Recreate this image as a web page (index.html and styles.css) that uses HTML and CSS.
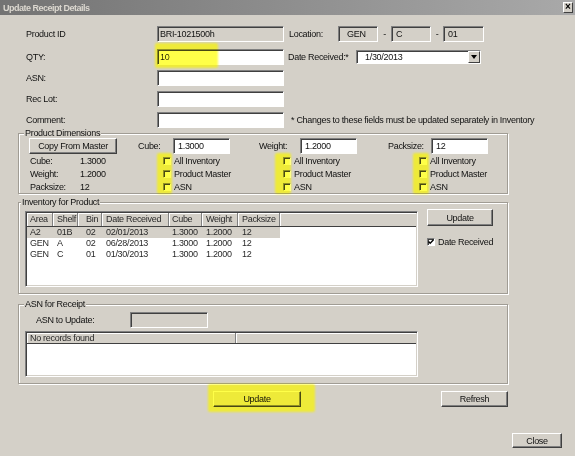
FILE: index.html
```html
<!DOCTYPE html>
<html lang="en">
<head>
    <meta charset="UTF-8">
    <title>Update Receipt Details</title>
    <link rel="stylesheet" href="styles.css">
</head>
<body>
<div class="window">
    <div class="titlebar">
        <span class="title">Update Receipt Details</span>
        <span class="close-x">&times;</span>
    </div>

    <div class="form-top">
        <div class="row row-first">
            <span class="lbl">Product ID</span>
            <div class="field off field-main">BRI-1021500h</div>
            <div class="side">
                <span class="loc-lbl">Location:</span>
                <div class="field off loc loc-gen">GEN</div>
                <span class="dash">-</span>
                <div class="field off loc">C</div>
                <span class="dash dash-2">-</span>
                <div class="field off loc loc-last">01</div>
            </div>
        </div>
        <div class="row">
            <span class="lbl">QTY:</span>
            <div class="field field-main">10</div>
            <div class="side">
                <span class="date-lbl">Date Received:*</span>
                <div class="field select">
                    <span>1/30/2013</span>
                    <span class="drop"><span class="tri"></span></span>
                </div>
            </div>
        </div>
        <div class="row">
            <span class="lbl">ASN:</span>
            <div class="field field-main"></div>
        </div>
        <div class="row">
            <span class="lbl">Rec Lot:</span>
            <div class="field field-main"></div>
        </div>
        <div class="row row-last">
            <span class="lbl">Comment:</span>
            <div class="field field-main"></div>
            <div class="side note">* Changes to these fields must be updated separately in Inventory</div>
        </div>
    </div>

    <!-- product dimensions -->
    <div class="group group-dims">
        <span class="group-title">Product Dimensions</span>
        <div class="dims">
            <div class="dcol dcol-a">
                <div class="dtop"><div class="btn btn-copy">Copy From Master</div></div>
                <div class="stats">
                    <div class="line"><span class="stat-lbl">Cube:</span>1.3000</div>
                    <div class="line"><span class="stat-lbl">Weight:</span>1.2000</div>
                    <div class="line"><span class="stat-lbl">Packsize:</span>12</div>
                </div>
            </div>
            <div class="dcol dcol-b">
                <div class="dtop"><span class="dim-lbl lbl-cube">Cube:</span><div class="field dim-in">1.3000</div></div>
                <div class="checks">
                    <div class="line"><span class="chk"></span>All Inventory</div>
                    <div class="line"><span class="chk"></span>Product Master</div>
                    <div class="line"><span class="chk"></span>ASN</div>
                </div>
            </div>
            <div class="dcol dcol-c">
                <div class="dtop"><span class="dim-lbl lbl-weight">Weight:</span><div class="field dim-in">1.2000</div></div>
                <div class="checks">
                    <div class="line"><span class="chk"></span>All Inventory</div>
                    <div class="line"><span class="chk"></span>Product Master</div>
                    <div class="line"><span class="chk"></span>ASN</div>
                </div>
            </div>
            <div class="dcol dcol-d">
                <div class="dtop"><span class="dim-lbl lbl-pack">Packsize:</span><div class="field dim-in">12</div></div>
                <div class="checks">
                    <div class="line"><span class="chk"></span>All Inventory</div>
                    <div class="line"><span class="chk"></span>Product Master</div>
                    <div class="line"><span class="chk"></span>ASN</div>
                </div>
            </div>
        </div>
    </div>

    <!-- inventory -->
    <div class="group group-inv">
        <span class="group-title">Inventory for Product</span>
        <div class="inv">
            <div class="grid grid-inv">
                <div class="gh">
                    <span>Area</span><span>Shelf</span><span>Bin</span><span>Date Received</span><span>Cube</span><span>Weight</span><span>Packsize</span><span></span>
                </div>
                <div class="gr sel">
                    <span>A2</span><span>01B</span><span>02</span><span>02/01/2013</span><span>1.3000</span><span>1.2000</span><span>12</span><span></span>
                </div>
                <div class="gr">
                    <span>GEN</span><span>A</span><span>02</span><span>06/28/2013</span><span>1.3000</span><span>1.2000</span><span>12</span><span></span>
                </div>
                <div class="gr">
                    <span>GEN</span><span>C</span><span>01</span><span>01/30/2013</span><span>1.3000</span><span>1.2000</span><span>12</span><span></span>
                </div>
            </div>
            <div class="inv-side">
                <div class="btn btn-inv">Update</div>
                <div class="line line-date">
                    <span class="chk on"><svg width="6" height="6" viewBox="0 0 6 6"><path d="M0.5 2.5 L2.2 4.3 L5.5 0.8" fill="none" stroke="#000" stroke-width="1.4"/></svg></span>Date Received
                </div>
            </div>
        </div>
    </div>

    <!-- asn -->
    <div class="group group-asn">
        <span class="group-title">ASN for Receipt</span>
        <div class="asn">
            <div class="asn-row">
                <span class="asn-lbl">ASN to Update:</span>
                <div class="field off asn-in"></div>
            </div>
            <div class="grid grid-asn">
                <div class="gh gh-asn"><span>No records found</span><span></span></div>
            </div>
        </div>
    </div>

    <div class="actions">
        <div class="btn btn-upd">Update</div>
        <div class="btn btn-refresh">Refresh</div>
    </div>
    <div class="btn btn-close">Close</div>

    <!-- highlighter marks -->
    <div class="hl" style="left:155px;top:43px;width:63px;height:25px"></div>
    <div class="hl" style="left:157px;top:153px;width:15px;height:41px"></div>
    <div class="hl" style="left:275px;top:153px;width:16px;height:41px"></div>
    <div class="hl" style="left:413px;top:153px;width:16px;height:41px"></div>
    <div class="hl" style="left:208px;top:384px;width:107px;height:28px"></div>
</div>
</body>
</html>
```

FILE: styles.css
```css
* {
    box-sizing: border-box;
}
body {
    margin: 0;
    background: #d4d0c8;
    font-family: "Liberation Sans", Arial, sans-serif;
    font-size: 9px;
    letter-spacing: -0.3px;
    color: #111;
}
.window {
    position: relative;
    width: 575px;
    height: 456px;
    background: #d4d0c8;
    overflow: hidden;
}
.titlebar {
    display: flex;
    align-items: center;
    justify-content: space-between;
    height: 15px;
    padding: 0 2px 0 3px;
    background: linear-gradient(to right, #737373, #a9a9a9);
}
.title {
    color: #dcd8d0;
    font-weight: bold;
    letter-spacing: -0.5px;
}
.close-x {
    width: 10px;
    height: 11px;
    background: #d4d0c8;
    border: 1px solid;
    border-color: #fff #404040 #404040 #fff;
    font: bold 10px/8px "Liberation Sans", sans-serif;
    letter-spacing: 0;
    text-align: center;
    color: #000;
}

/* top form */
.form-top {
    padding: 11px 0 0 26px;
}
.row {
    display: flex;
    align-items: center;
    height: 16px;
    margin-bottom: 5px;
}
.row-first {
    margin-bottom: 7px;
}
.row-last {
    margin-bottom: 0;
}
.row > *,
.side > *,
.dtop > *,
.line > *,
.asn-row > * {
    flex-shrink: 0;
    white-space: nowrap;
}
.lbl {
    width: 131px;
}
.field {
    height: 16px;
    line-height: 14px;
    padding-left: 2px;
    background: #fff;
    border: 1px solid;
    border-color: #808080 #fff #fff #808080;
    box-shadow: inset 1px 1px 0 #404040;
    white-space: nowrap;
    overflow: hidden;
}
.field.off {
    background: #d4d0c8;
}
.field-main {
    width: 127px;
}
.side {
    display: flex;
    align-items: center;
    margin-left: 4px;
}
.note {
    padding-left: 3px;
    white-space: nowrap;
}
.loc-lbl {
    width: 50px;
    padding-left: 1px;
}
.loc {
    width: 40px;
    padding-left: 4px;
}
.loc-gen {
    padding-left: 8px;
}
.loc-last {
    width: 41px;
}
.dash {
    width: 13px;
    text-align: center;
}
.dash-2 {
    width: 12px;
}
.date-lbl {
    width: 68px;
}
.select {
    display: flex;
    align-items: center;
    justify-content: space-between;
    width: 125px;
    height: 14px;
    padding-left: 8px;
}
.drop {
    display: flex;
    align-items: center;
    justify-content: center;
    width: 12px;
    height: 12px;
    background: #d4d0c8;
    border: 1px solid;
    border-color: #fff #404040 #404040 #fff;
}
.tri {
    border-left: 3px solid transparent;
    border-right: 3px solid transparent;
    border-top: 4px solid #000;
}

/* groups */
.group {
    margin-left: 18px;
    width: 490px;
    border: 1px solid #a09c94;
    box-shadow: inset 1px 1px 0 #fff, 1px 1px 0 #fff;
}
.group-title {
    display: block;
    width: fit-content;
    height: 12px;
    line-height: 12px;
    margin: -7px 0 -5px 5px;
    padding: 0 1px;
    background: #d4d0c8;
}
.group-dims {
    margin-top: 5px;
}
.group-inv {
    margin-top: 8px;
}
.group-inv .group-title {
    margin-left: 2px;
}
.group-asn {
    margin-top: 10px;
}

/* product dimensions */
.dims {
    display: flex;
    padding: 4px 0 0 10px;
}
.dcol-a {
    width: 109px;
}
.dcol-b {
    width: 121px;
}
.dcol-c {
    width: 129px;
}
.dcol-d {
    flex: 1;
}
.dtop {
    display: flex;
    align-items: center;
    height: 16px;
}
.lbl-cube {
    width: 35px;
}
.lbl-weight {
    width: 41px;
}
.lbl-pack {
    width: 43px;
}
.dim-in {
    width: 57px;
    padding-left: 4px;
}
.line {
    display: flex;
    align-items: center;
    height: 13px;
    white-space: nowrap;
}
.stats {
    padding-left: 1px;
}
.stat-lbl {
    width: 50px;
}
.dcol-b .checks {
    padding-left: 25px;
}
.dcol-c .checks {
    padding-left: 24px;
}
.dcol-d .checks {
    padding-left: 31px;
}
.chk {
    display: inline-flex;
    align-items: center;
    justify-content: center;
    width: 8px;
    height: 8px;
    margin-right: 3px;
    background: #fff;
    border: 1px solid;
    border-color: #808080 #fff #fff #808080;
    box-shadow: inset 1px 1px 0 #404040;
}

/* buttons */
.btn {
    display: flex;
    align-items: center;
    justify-content: center;
    height: 16px;
    background: #d4d0c8;
    border: 1px solid;
    border-color: #fff #404040 #404040 #fff;
    box-shadow: inset -1px -1px 0 #808080;
    white-space: nowrap;
}
.btn-copy {
    width: 88px;
}

/* grids */
.inv {
    display: flex;
    padding: 6px 0 6px 6px;
}
.grid {
    width: 393px;
    padding: 1px;
    background: #fff;
    border: 1px solid;
    border-color: #808080 #fff #fff #808080;
    box-shadow: inset 1px 1px 0 #404040, inset -1px -1px 0 #d4d0c8;
    color: #2a2a2a;
}
.grid-inv {
    height: 76px;
    margin-top: 2px;
}
.gh,
.gr {
    display: grid;
    grid-template-columns: 26px 25px 24px 67px 33px 36px 42px 1fr;
}
.gh {
    height: 14px;
    background: #d4d0c8;
    border-bottom: 1px solid #404040;
}
.gh span {
    line-height: 13px;
    border-right: 1px solid #808080;
    box-shadow: inset 1px 1px 0 #fff;
    white-space: nowrap;
    overflow: hidden;
}
.gh span:last-child {
    border-right: 0;
}
.gr {
    height: 11px;
    line-height: 11px;
}
.gr span {
    white-space: nowrap;
}
.gr.sel span:not(:last-child) {
    background: #d4d0c8;
}
.gh span:nth-child(1), .gr span:nth-child(1) { padding-left: 3px; }
.gh span:nth-child(2), .gr span:nth-child(2) { padding-left: 4px; }
.gh span:nth-child(3), .gr span:nth-child(3) { padding-left: 8px; }
.gh span:nth-child(4), .gr span:nth-child(4) { padding-left: 4px; }
.gh span:nth-child(5), .gr span:nth-child(5) { padding-left: 3px; }
.gh span:nth-child(6), .gr span:nth-child(6) { padding-left: 4px; }
.gh span:nth-child(7), .gr span:nth-child(7) { padding-left: 4px; }
.inv-side {
    margin-left: 9px;
}
.btn-inv {
    width: 66px;
    height: 17px;
}
.line-date {
    margin-top: 9px;
}
.chk.on svg {
    display: block;
}

/* asn */
.asn {
    padding: 7px 0 6px 6px;
}
.asn-row {
    display: flex;
    align-items: center;
    height: 16px;
    margin-left: 11px;
}
.asn-lbl {
    width: 94px;
}
.asn-in {
    width: 78px;
}
.grid-asn {
    height: 46px;
    margin-top: 3px;
}
.gh-asn {
    height: 11px;
    grid-template-columns: 209px 1fr;
}
.gh-asn span {
    line-height: 10px;
    padding-left: 4px;
}

/* bottom buttons */
.actions {
    display: flex;
    margin: 7px 0 0 213px;
}
.btn-upd {
    width: 88px;
}
.btn-refresh {
    width: 67px;
    margin-left: 140px;
}
.btn-close {
    width: 50px;
    height: 15px;
    margin: 26px 0 0 512px;
}

/* highlighter */
.hl {
    position: absolute;
    pointer-events: none;
}
.hl::before,
.hl::after {
    content: "";
    position: absolute;
    inset: 0;
    border-radius: 2px;
    filter: blur(1px);
}
.hl::before {
    background: rgb(28, 28, 0);
    mix-blend-mode: color-dodge;
}
.hl::after {
    background: #ffff48;
    mix-blend-mode: multiply;
}
```
